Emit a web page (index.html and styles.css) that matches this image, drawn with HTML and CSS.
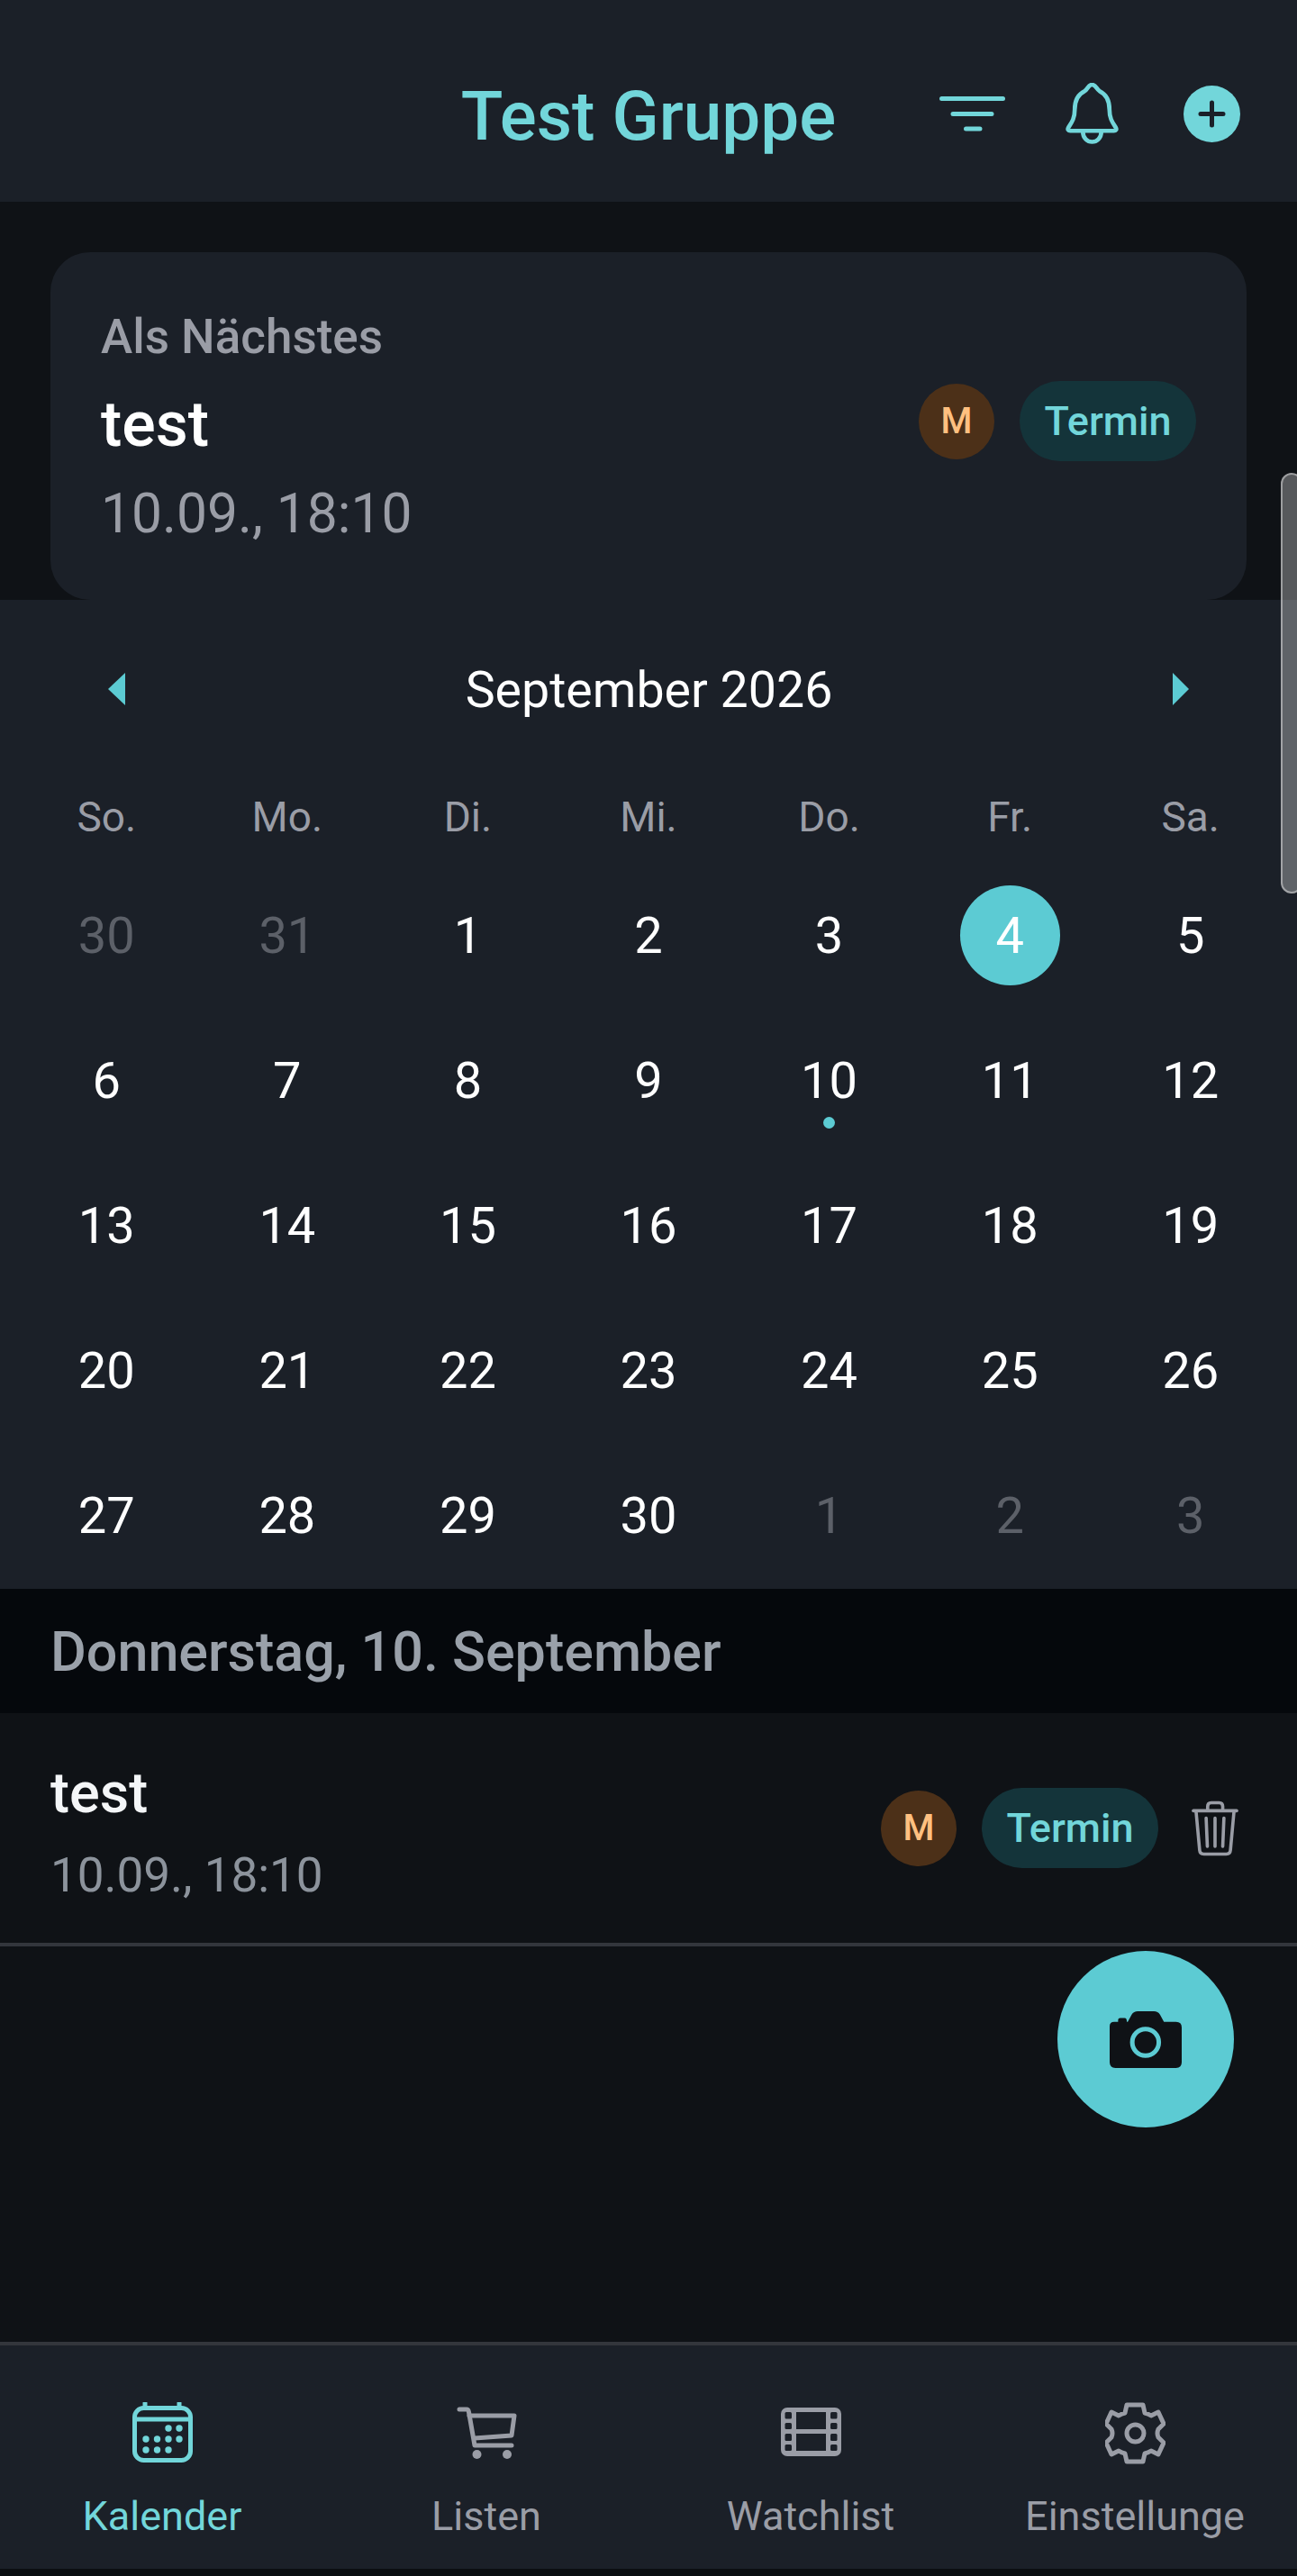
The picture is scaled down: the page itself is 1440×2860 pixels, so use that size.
FILE: index.html
```html
<!DOCTYPE html>
<html lang="de">
<head>
    <meta charset="UTF-8">
    <meta name="viewport" content="width=device-width, initial-scale=1.0">
    <title>Test Gruppe</title>
    <link rel="stylesheet" href="styles.css">
</head>
<body>
<div class="app">
    <header class="topbar">
        <div></div>
        <h1 class="topbar-title">Test Gruppe</h1>
        <div class="topbar-actions">
            <button class="icon-btn">
                <svg width="73" height="39" viewBox="0 0 73 39" fill="none" stroke="#72d6da" stroke-width="5" stroke-linecap="round">
                    <path d="M2.5 2.5H70.5M15 19.5H58M29.5 36H45"/>
                </svg>
            </button>
            <button class="icon-btn">
                <svg width="59" height="68" viewBox="670 97 175 203" fill="none" stroke="#72d6da" stroke-width="14" stroke-linejoin="round">
                    <path d="M757 103C770 103 772 118 782 124C805 135 815 155 815 185C815 215 825 228 836 245C840 252 836 256 830 256H685C679 256 675 252 679 245C690 228 700 215 700 185C700 155 710 135 733 124C743 118 745 103 757 103Z"/>
                    <path d="M727 258C727 304 788 304 788 258"/>
                </svg>
            </button>
            <button class="icon-btn">
                <svg width="63" height="63" viewBox="0 0 63 63">
                    <circle cx="31.5" cy="31.5" r="31.5" fill="#72d6da"/>
                    <path d="M31.5 19V44M19 31.5H44" stroke="#1b2028" stroke-width="5" stroke-linecap="round"/>
                </svg>
            </button>
        </div>
    </header>

    <main class="content">
        <section class="next-wrap">
            <div class="next-card">
                <div class="next-text">
                    <div class="next-label">Als Nächstes</div>
                    <div class="next-title">test</div>
                    <div class="next-date">10.09., 18:10</div>
                </div>
                <div class="tags">
                    <span class="avatar">M</span>
                    <span class="pill">Termin</span>
                </div>
            </div>
        </section>

        <section class="calendar">
            <div class="month-row">
                <svg class="month-arrow" width="19" height="36" viewBox="0 0 19 36"><polygon points="19,0 0,18 19,36" fill="#5ccbd3"/></svg>
                <span class="month-name">September 2026</span>
                <svg class="month-arrow" width="18" height="36" viewBox="0 0 18 36"><polygon points="0,0 18,18 0,36" fill="#5ccbd3"/></svg>
            </div>
            <div class="week-row">
                <span>So.</span><span>Mo.</span><span>Di.</span><span>Mi.</span><span>Do.</span><span>Fr.</span><span>Sa.</span>
            </div>
            <div class="days">
                <div class="day muted">30</div>
                <div class="day muted">31</div>
                <div class="day">1</div>
                <div class="day">2</div>
                <div class="day">3</div>
                <div class="day"><span class="selected">4</span></div>
                <div class="day">5</div>
                <div class="day">6</div>
                <div class="day">7</div>
                <div class="day">8</div>
                <div class="day">9</div>
                <div class="day">10<span class="dot"></span></div>
                <div class="day">11</div>
                <div class="day">12</div>
                <div class="day">13</div>
                <div class="day">14</div>
                <div class="day">15</div>
                <div class="day">16</div>
                <div class="day">17</div>
                <div class="day">18</div>
                <div class="day">19</div>
                <div class="day">20</div>
                <div class="day">21</div>
                <div class="day">22</div>
                <div class="day">23</div>
                <div class="day">24</div>
                <div class="day">25</div>
                <div class="day">26</div>
                <div class="day">27</div>
                <div class="day">28</div>
                <div class="day">29</div>
                <div class="day">30</div>
                <div class="day muted">1</div>
                <div class="day muted">2</div>
                <div class="day muted">3</div>
            </div>
        </section>

        <div class="date-head">Donnerstag, 10. September</div>

        <div class="event-row">
            <div class="event-text">
                <div class="event-title">test</div>
                <div class="event-date">10.09., 18:10</div>
            </div>
            <div class="tags">
                <span class="avatar">M</span>
                <span class="pill">Termin</span>
                <svg class="trash" width="52" height="62" viewBox="1148 237 158 185" fill="none" stroke="#9a9da6" stroke-width="11" stroke-linecap="round" stroke-linejoin="round">
                    <path d="M1154 270H1300"/>
                    <path d="M1202 266V256Q1202 243 1214 243H1241Q1253 243 1253 256V266"/>
                    <path d="M1163 272L1175 403Q1176 416 1189 416H1265Q1278 416 1279 403L1291 272"/>
                    <path d="M1197 295L1201 390M1227 295V390M1257 295L1253 390"/>
                </svg>
            </div>
        </div>

        <button class="fab">
            <svg width="80" height="63" viewBox="875 937 239 188">
                <path fill="#0f1216" d="M890 972H903V965Q903 959 910 959H925Q932 959 932 972H935L948 948Q955 937 968 937H1022Q1035 937 1042 948L1055 972H1095Q1114 972 1114 991V1106Q1114 1125 1095 1125H894Q875 1125 875 1106V987Q875 972 890 972Z"/>
                <circle cx="994" cy="1040" r="44" fill="#0f1216" stroke="#5ccbd3" stroke-width="15"/>
            </svg>
        </button>
    </main>

    <nav class="tabbar">
        <div class="tab active">
            <svg width="67" height="67" viewBox="0 0 67 67" fill="none" stroke="#72d6da" stroke-width="5">
                <rect x="2.5" y="6.5" width="62" height="58" rx="10"/>
                <path d="M2.5 19H64.5"/>
                <path d="M14 1V6M52 1V6" stroke-linecap="round"/>
                <g fill="#72d6da" stroke="none">
                    <circle cx="40" cy="29" r="3.7"/><circle cx="52" cy="29" r="3.7"/>
                    <circle cx="15" cy="41" r="3.7"/><circle cx="27.5" cy="41" r="3.7"/><circle cx="40" cy="41" r="3.7"/><circle cx="52" cy="41" r="3.7"/>
                    <circle cx="15" cy="53" r="3.7"/><circle cx="27.5" cy="53" r="3.7"/><circle cx="40" cy="53" r="3.7"/>
                </g>
            </svg>
            <span>Kalender</span>
        </div>
        <div class="tab">
            <svg width="67" height="67" viewBox="0 -5 67 67" fill="none" stroke="#9a9da6" stroke-width="5" stroke-linecap="round" stroke-linejoin="round">
                <path d="M3 3H11Q13 3 13.500 6L20 43H61"/>
                <path d="M14 10H64L61 32L20 35"/>
                <circle cx="22.500" cy="53" r="5" fill="#9a9da6" stroke="none"/>
                <circle cx="56" cy="53" r="5" fill="#9a9da6" stroke="none"/>
            </svg>
            <span>Listen</span>
        </div>
        <div class="tab">
            <svg width="67" height="67" viewBox="0 -6 67 67">
                <rect width="67" height="54" rx="7" fill="#9a9da6"/>
                <g fill="#1b2028">
                    <rect x="17" y="5" width="33" height="19"/>
                    <rect x="17" y="29" width="33" height="19"/>
                    <rect x="4.500" y="5" width="7.500" height="7.500" rx="1.500"/><rect x="4.500" y="17" width="7.500" height="7" rx="1.500"/>
                    <rect x="4.500" y="29" width="7.500" height="8" rx="1.500"/><rect x="4.500" y="41" width="7.500" height="7" rx="1.500"/>
                    <rect x="55" y="5" width="7.500" height="7.500" rx="1.500"/><rect x="55" y="17" width="7.500" height="7" rx="1.500"/>
                    <rect x="55" y="29" width="7.500" height="8" rx="1.500"/><rect x="55" y="41" width="7.500" height="7" rx="1.500"/>
                </g>
            </svg>
            <span>Watchlist</span>
        </div>
        <div class="tab">
            <svg width="67" height="69" viewBox="0 0 67 69" fill="none" stroke="#9a9da6" stroke-width="5" stroke-linejoin="round">
                <path d="M24 3H42L44 12Q48 13 51 15L59 11L65 24L59 30Q57 34.500 59 39L65 45L59 58L51 54Q48 56 44 57L42 66H24L22 57Q18 56 15 54L7 58L1 45L7 39Q9 34.500 7 30L1 24L7 11L15 15Q18 13 22 12Z"/>
                <circle cx="33.500" cy="34.500" r="9.500"/>
            </svg>
            <span>Einstellunge</span>
        </div>
    </nav>

    <div class="scrollbar"></div>
</div>
</body>
</html>
```

FILE: styles.css
```css
* {
    box-sizing: border-box;
}

body {
    margin: 0;
    background-color: #0b0e11;
    font-family: Roboto, "Liberation Sans", sans-serif;
}

.app {
    position: relative;
    display: flex;
    flex-direction: column;
    width: 1440px;
    height: 2860px;
    overflow: hidden;
}

button {
    background: none;
    border: none;
    padding: 0;
}

/* top bar */
.topbar {
    display: grid;
    grid-template-columns: 1fr auto 1fr;
    align-items: center;
    height: 224px;
    padding: 28px 28px 0;
    background-color: #1b2028;
}

.topbar-title {
    margin: 6px 0 0;
    font-size: 76.5px;
    font-weight: 500;
    color: #72d6da;
}

.topbar-actions {
    display: flex;
    justify-content: flex-end;
}

.icon-btn {
    display: flex;
    align-items: center;
    justify-content: center;
    width: 133px;
}

/* next up card */
.content {
    position: relative;
    flex: 1;
    background-color: #0f1216;
}

.next-wrap {
    padding: 56px 56px 0;
}

.next-card {
    display: flex;
    align-items: flex-start;
    justify-content: space-between;
    height: 386px;
    padding: 64px 56px 0;
    background-color: #1b2028;
    border-radius: 44px;
}

.next-card .tags {
    margin-top: 79px;
}

.next-label {
    font-size: 53px;
    line-height: 60px;
    font-weight: 500;
    color: #9a9da6;
}

.next-title {
    margin-top: 31px;
    font-size: 70px;
    line-height: 72px;
    font-weight: 500;
    color: #fff;
}

.next-date {
    margin-top: 31px;
    font-size: 60.5px;
    line-height: 66px;
    color: #9a9da6;
}

.tags {
    display: flex;
    align-items: center;
    gap: 28px;
}

.avatar {
    display: flex;
    align-items: center;
    justify-content: center;
    width: 84px;
    height: 84px;
    border-radius: 50%;
    background-color: #4c3018;
    color: #ffc080;
    font-size: 40px;
    font-weight: 500;
}

.pill {
    display: flex;
    align-items: center;
    justify-content: center;
    width: 196px;
    height: 89px;
    border-radius: 45px;
    background-color: #14343a;
    color: #72d6da;
    font-size: 45px;
    font-weight: 500;
}

/* calendar */
.calendar {
    height: 1098px;
    padding: 20px 18px 0;
    background-color: #1b2028;
}

.month-row {
    display: flex;
    align-items: center;
    justify-content: space-between;
    height: 160px;
    padding: 0 102px;
}

.month-arrow {
    margin-top: -3px;
}

.month-name {
    font-size: 55.5px;
    color: #fff;
}

.week-row,
.days {
    display: grid;
    grid-template-columns: repeat(7, 1fr);
    text-align: center;
}

.week-row {
    height: 111px;
    padding-top: 10px;
    align-items: center;
    font-size: 46px;
    color: #9a9da6;
}

.days {
    padding-top: 1px;
}

.day {
    position: relative;
    display: flex;
    align-items: center;
    justify-content: center;
    height: 161px;
    font-size: 56px;
    color: #fff;
}

.day.muted {
    color: #5c6068;
}

.selected {
    display: flex;
    align-items: center;
    justify-content: center;
    width: 111px;
    height: 111px;
    border-radius: 50%;
    background-color: #5ccbd3;
}

.dot {
    position: absolute;
    top: 121px;
    left: 50%;
    width: 13px;
    height: 13px;
    margin-left: -6.5px;
    border-radius: 50%;
    background-color: #5ccbd3;
}

/* event list */
.date-head {
    display: flex;
    align-items: center;
    height: 138px;
    padding: 2px 0 0 56px;
    background-color: #05080c;
    font-size: 61px;
    font-weight: 500;
    color: #9aa1aa;
}

.event-row {
    display: flex;
    align-items: center;
    justify-content: space-between;
    height: 259px;
    padding: 0 65px 0 56px;
    border-bottom: 4px solid #33363c;
}

.event-text {
    margin-top: 9px;
}

.event-title {
    font-size: 63px;
    line-height: 70px;
    font-weight: 500;
    color: #f4f6f8;
}

.event-date {
    margin-top: 26px;
    font-size: 53px;
    line-height: 60px;
    color: #8c939c;
}

.trash {
    margin-left: 9px;
}

.fab {
    position: absolute;
    top: 1942px;
    left: 1174px;
    display: flex;
    align-items: center;
    justify-content: center;
    width: 196px;
    height: 196px;
    border-radius: 50%;
    background-color: #5ccbd3;
}

/* bottom tabs */
.tabbar {
    display: grid;
    grid-template-columns: repeat(4, 1fr);
    height: 252px;
    margin-bottom: 8px;
    padding-top: 63px;
    background-color: #1b2028;
    border-top: 4px solid #33363c;
}

.tab {
    display: flex;
    flex-direction: column;
    align-items: center;
    font-size: 45px;
    color: #9a9da6;
}

.tab svg {
    flex-shrink: 0;
}

.tab span {
    margin-top: 33px;
    white-space: nowrap;
}

.tab:last-child span {
    margin-top: 31px;
}

.tab.active {
    color: #72d6da;
}

.scrollbar {
    position: absolute;
    top: 525px;
    left: 1422px;
    width: 24px;
    height: 467px;
    border: 2px solid rgba(255, 255, 255, 0.42);
    border-radius: 12px;
    background-color: rgba(255, 255, 255, 0.3);
}
```
